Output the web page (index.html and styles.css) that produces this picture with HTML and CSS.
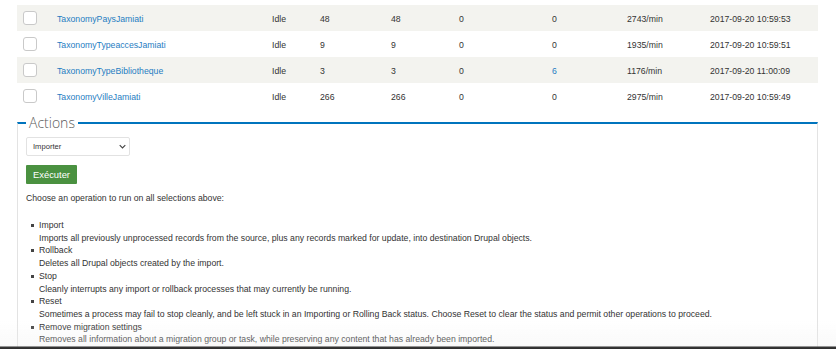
FILE: index.html
```html
<!DOCTYPE html>
<html lang="fr">
<head>
  <meta charset="UTF-8" />
  <title>Migrations</title>
  <link rel="stylesheet" href="styles.css">
</head>
<body>

  <div class="page">
    <table class="migrations">
      <colgroup>
        <col class="c-check"><col class="c-name"><col class="c-status"><col class="c-total">
        <col class="c-imported"><col class="c-unproc"><col class="c-msgs"><col class="c-rate"><col class="c-last">
      </colgroup>
      <tbody>
        <tr class="odd">
          <td><span class="checkbox"></span></td>
          <td><a href="#">TaxonomyPaysJamiati</a></td>
          <td>Idle</td><td>48</td><td>48</td><td>0</td><td>0</td><td>2743/min</td><td>2017-09-20 10:59:53</td>
        </tr>
        <tr>
          <td><span class="checkbox"></span></td>
          <td><a href="#">TaxonomyTypeaccesJamiati</a></td>
          <td>Idle</td><td>9</td><td>9</td><td>0</td><td>0</td><td>1935/min</td><td>2017-09-20 10:59:51</td>
        </tr>
        <tr class="odd">
          <td><span class="checkbox"></span></td>
          <td><a href="#">TaxonomyTypeBibliotheque</a></td>
          <td>Idle</td><td>3</td><td>3</td><td>0</td><td><a href="#">6</a></td><td>1176/min</td><td>2017-09-20 11:00:09</td>
        </tr>
        <tr>
          <td><span class="checkbox"></span></td>
          <td><a href="#">TaxonomyVilleJamiati</a></td>
          <td>Idle</td><td>266</td><td>266</td><td>0</td><td>0</td><td>2975/min</td><td>2017-09-20 10:59:49</td>
        </tr>
      </tbody>
    </table>

    <fieldset class="actions">
      <legend>Actions</legend>

      <div class="select-wrap">
        <select class="op-select">
          <option>Importer</option>
        </select>
        <svg class="select-arrow" viewBox="0 0 10 6" width="7" height="5">
          <path d="M1 1l4 4 4-4" fill="none" stroke="#444" stroke-width="1.6"/>
        </svg>
      </div>

      <button class="btn-run" type="button">Exécuter</button>

      <p class="intro">Choose an operation to run on all selections above:</p>

      <ul class="ops">
        <li>Import<div class="desc">Imports all previously unprocessed records from the source, plus any records marked for update, into destination Drupal objects.</div></li>
        <li>Rollback<div class="desc">Deletes all Drupal objects created by the import.</div></li>
        <li>Stop<div class="desc">Cleanly interrupts any import or rollback processes that may currently be running.</div></li>
        <li>Reset<div class="desc">Sometimes a process may fail to stop cleanly, and be left stuck in an Importing or Rolling Back status. Choose Reset to clear the status and permit other operations to proceed.</div></li>
        <li>Remove migration settings<div class="desc">Removes all information about a migration group or task, while preserving any content that has already been imported.</div></li>
      </ul>
    </fieldset>
  </div>

  <div class="screen-edge"></div>

</body>
</html>
```

FILE: styles.css
```css
/* ===== Palette ===== */
:root {
  --text: #333;
  --link: #1f7dc2;
  --row-alt: #f3f3ef;
  --blue: #0074bd;
  --border: #e3e3e3;
  --green: #4a9140;
}

*, *::before, *::after { box-sizing: border-box; }
html, body { margin: 0; padding: 0; }
body {
  font-family: "Liberation Sans", Arial, sans-serif;
  font-size: 8.7px;
  color: var(--text);
  background: #fff;
  overflow: hidden;
}
a { color: var(--link); text-decoration: none; }

.page { padding: 5px 18px 0 17px; }

/* Table */
.migrations {
  width: 801px;
  border-collapse: collapse;
  table-layout: fixed;
}
.c-check { width: 40px; }
.c-name { width: 215px; }
.c-status { width: 48px; }
.c-total { width: 71px; }
.c-imported { width: 68px; }
.c-unproc { width: 93px; }
.c-msgs { width: 75px; }
.c-rate { width: 83px; }
.migrations td {
  height: 26px;
  padding: 2px 0 0;
  vertical-align: middle;
  white-space: nowrap;
}
.migrations tr.odd { background: var(--row-alt); }
.checkbox {
  display: block;
  width: 14px;
  height: 14px;
  margin: -2px 0 0 6px;
  background: #fff;
  border: 1px solid #c9c9c9;
  border-radius: 3px;
}

/* Actions fieldset */
.actions {
  margin: 5px 0 0;
  padding: 0 8px 8px;
  min-width: 0;
  width: 801px;
  border: 1px solid var(--border);
  border-top: 2px solid var(--blue);
  border-bottom: none;
}
.actions legend {
  padding: 0 3px;
  font-family: "Open Sans", sans-serif;
  font-weight: 300;
  font-size: 14px;
  line-height: 18px;
  color: #5a5a5a;
}

.select-wrap {
  position: relative;
  width: 104px;
  margin-top: 5px;
}
.op-select {
  appearance: none;
  -webkit-appearance: none;
  display: block;
  width: 104px;
  height: 19px;
  padding: 0 6px;
  font-family: "Liberation Sans", Arial, sans-serif;
  font-size: 7.6px;
  color: #333;
  background: #fff;
  border: 1px solid #e2e2e2;
  border-radius: 2px;
}
.select-arrow {
  position: absolute;
  right: 4px;
  top: 7px;
}

.btn-run {
  display: block;
  margin-top: 9px;
  height: 19px;
  padding: 0 7px;
  font-family: "Liberation Sans", Arial, sans-serif;
  font-size: 9.4px;
  color: #fff;
  background: var(--green);
  border: none;
  border-radius: 1px;
}

.intro { margin: 8px 0 0; line-height: 12px; }

.ops {
  margin: 15px 0 0;
  padding-left: 13px;
  list-style: none;
  line-height: 12.7px;
}
.ops li { position: relative; }
.ops li::before {
  content: "";
  position: absolute;
  left: -8px;
  top: 5px;
  width: 3px;
  height: 3px;
  background: #444;
}

/* bottom edge of the captured screen */
.screen-edge {
  position: fixed;
  left: 0;
  right: 0;
  bottom: 0;
  height: 28px;
  background: linear-gradient(to bottom, rgba(240,240,240,0), rgba(238,238,238,0.35) 90%, #3a3a3a 92%, #2a2a2a);
  pointer-events: none;
}
```
